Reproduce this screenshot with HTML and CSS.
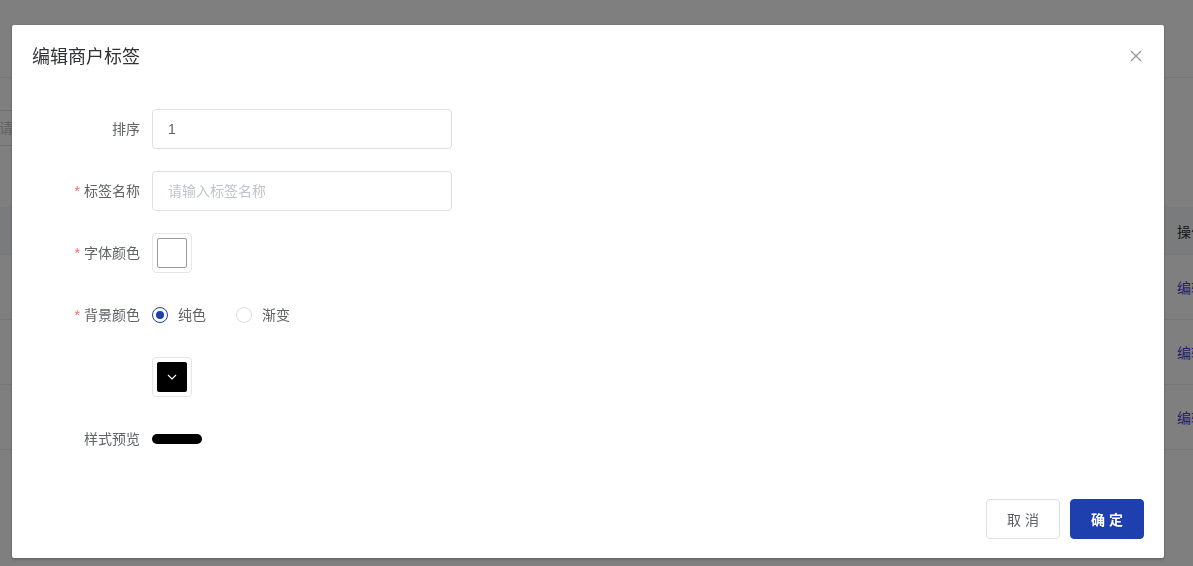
FILE: index.html
```html
<!DOCTYPE html>
<html lang="zh-CN">
<head>
    <meta charset="UTF-8">
    <meta name="viewport" content="width=device-width, initial-scale=1.0">
    <title>编辑商户标签</title>
    <link rel="stylesheet" href="styles.css">
</head>
<body>
<div class="page">
    <div class="topbar"></div>
    <div class="search">
        <div class="search-input">请输入商户名称</div>
    </div>
    <div class="table">
        <div class="tr thead">
            <div class="td"></div>
            <div class="td">操作</div>
        </div>
        <div class="tr">
            <div class="td"></div>
            <div class="td"><a class="link">编辑</a></div>
        </div>
        <div class="tr">
            <div class="td"></div>
            <div class="td"><a class="link">编辑</a></div>
        </div>
        <div class="tr">
            <div class="td"></div>
            <div class="td"><a class="link">编辑</a></div>
        </div>
    </div>
</div>

<div class="mask">
    <div class="dialog">
        <div class="dialog-header">
            <span class="dialog-title">编辑商户标签</span>
            <button class="dialog-close" aria-label="Close">
                <svg width="12" height="12" viewBox="0 0 12 12">
                    <path d="M1 1L11 11M11 1L1 11" stroke="#909399" stroke-width="1.2" fill="none"/>
                </svg>
            </button>
        </div>
        <div class="dialog-body">
            <div class="form-item">
                <label class="form-label">排序</label>
                <div class="form-content">
                    <input class="input" type="text" value="1">
                </div>
            </div>
            <div class="form-item">
                <label class="form-label is-required">标签名称</label>
                <div class="form-content">
                    <input class="input" type="text" placeholder="请输入标签名称">
                </div>
            </div>
            <div class="form-item">
                <label class="form-label is-required">字体颜色</label>
                <div class="form-content">
                    <div class="color-picker">
                        <span class="color-swatch white"></span>
                    </div>
                </div>
            </div>
            <div class="form-item">
                <label class="form-label is-required">背景颜色</label>
                <div class="form-content">
                    <label class="radio checked"><span class="radio-dot"></span><span class="radio-label">纯色</span></label>
                    <label class="radio"><span class="radio-dot"></span><span class="radio-label">渐变</span></label>
                </div>
            </div>
            <div class="form-item">
                <label class="form-label"></label>
                <div class="form-content">
                    <div class="color-picker">
                        <span class="color-swatch black">
                            <svg width="10" height="6" viewBox="0 0 10 6">
                                <path d="M1 1L5 5L9 1" stroke="#fff" stroke-width="1.1" fill="none"/>
                            </svg>
                        </span>
                    </div>
                </div>
            </div>
            <div class="form-item last">
                <label class="form-label">样式预览</label>
                <div class="form-content">
                    <span class="tag-preview"></span>
                </div>
            </div>
        </div>
        <div class="dialog-footer">
            <button class="btn">取 消</button>
            <button class="btn btn-primary">确 定</button>
        </div>
    </div>
</div>
</body>
</html>
```

FILE: styles.css
```css
body {
    margin: 0;
    padding: 0;
    font-family: "Liberation Sans", "Noto Sans CJK SC", sans-serif;
    font-size: 14px;
    color: #606266;
    background: #fff;
    height: 566px;
    overflow: hidden;
}
.page {
    width: 1300px;
}
.topbar {
    height: 77px;
    border-bottom: 1px solid #ebeef5;
}
.search {
    padding-top: 32px;
    margin-left: -20px;
}
.search-input {
    width: 220px;
    height: 34px;
    line-height: 34px;
    border: 1px solid #dcdfe6;
    border-radius: 4px;
    padding-left: 18px;
    color: #c0c4cc;
}
.table {
    margin-top: 61px;
}
.tr {
    display: grid;
    grid-template-columns: 1165px 120px;
    height: 64px;
    border-bottom: 1px solid #ebeef5;
    align-items: center;
}
.thead {
    height: 47px;
    background: #f5f7fa;
    color: #303133;
}
.td:last-child {
    padding-left: 12px;
}
.link {
    color: #4b3fd8;
}

.mask {
    position: fixed;
    inset: 0;
    background: rgba(0, 0, 0, 0.5);
    padding: 25px 0 0 12px;
}
.dialog {
    width: 1152px;
    background: #fff;
    border-radius: 2px;
    box-shadow: 0 1px 3px rgba(0, 0, 0, 0.3);
}
.dialog-header {
    display: flex;
    justify-content: space-between;
    align-items: center;
    padding: 20px 20px 10px;
}
.dialog-title {
    font-size: 18px;
    line-height: 24px;
    color: #303133;
}
.dialog-close {
    border: none;
    background: none;
    padding: 0;
    width: 16px;
    height: 16px;
    display: flex;
    align-items: center;
    justify-content: center;
    margin-top: -2px;
}
.dialog-body {
    padding: 30px 20px;
}
.form-item {
    display: flex;
    align-items: center;
    height: 40px;
    margin-bottom: 22px;
}
.form-item.last {
    margin-bottom: 0;
}
.form-label {
    width: 120px;
    box-sizing: border-box;
    padding-right: 12px;
    padding-bottom: 2px;
    text-align: right;
    color: #606266;
}
.form-label.is-required::before {
    content: "*";
    color: #f56c6c;
    margin-right: 4px;
}
.form-content {
    display: flex;
    align-items: center;
}
.input {
    width: 300px;
    height: 40px;
    box-sizing: border-box;
    border: 1px solid #dcdfe6;
    border-radius: 4px;
    padding: 0 15px;
    font-family: inherit;
    font-size: 14px;
    color: #606266;
    outline: none;
}
.input::placeholder {
    color: #c0c4cc;
}
.color-picker {
    width: 40px;
    height: 40px;
    box-sizing: border-box;
    padding: 4px;
    border: 1px solid #e6e6e6;
    border-radius: 4px;
}
.color-swatch {
    display: flex;
    align-items: center;
    justify-content: center;
    width: 100%;
    height: 100%;
    box-sizing: border-box;
    border-radius: 2px;
}
.color-swatch.white {
    background: #fff;
    border: 1px solid #999;
}
.color-swatch.black {
    background: #000;
}
.radio {
    display: flex;
    align-items: center;
    margin-right: 30px;
    color: #606266;
}
.radio-dot {
    width: 16px;
    height: 16px;
    box-sizing: border-box;
    border: 1px solid #dcdfe6;
    border-radius: 50%;
    display: flex;
    align-items: center;
    justify-content: center;
}
.radio.checked .radio-dot {
    border-color: #1e40af;
}
.radio.checked .radio-dot::after {
    content: "";
    width: 8px;
    height: 8px;
    border-radius: 50%;
    background: #1e40af;
}
.radio-label {
    padding-left: 10px;
    padding-bottom: 2px;
}
.tag-preview {
    width: 50px;
    height: 10px;
    border-radius: 5px;
    background: #000;
}
.dialog-footer {
    display: flex;
    justify-content: flex-end;
    gap: 10px;
    padding: 10px 20px 19px;
}
.btn {
    width: 74px;
    height: 40px;
    border: 1px solid #dcdfe6;
    border-radius: 4px;
    background: #fff;
    color: #606266;
    font-family: inherit;
    font-size: 14px;
}
.btn-primary {
    background: #1e40af;
    border-color: #1e40af;
    color: #fff;
    font-weight: bold;
}
```
